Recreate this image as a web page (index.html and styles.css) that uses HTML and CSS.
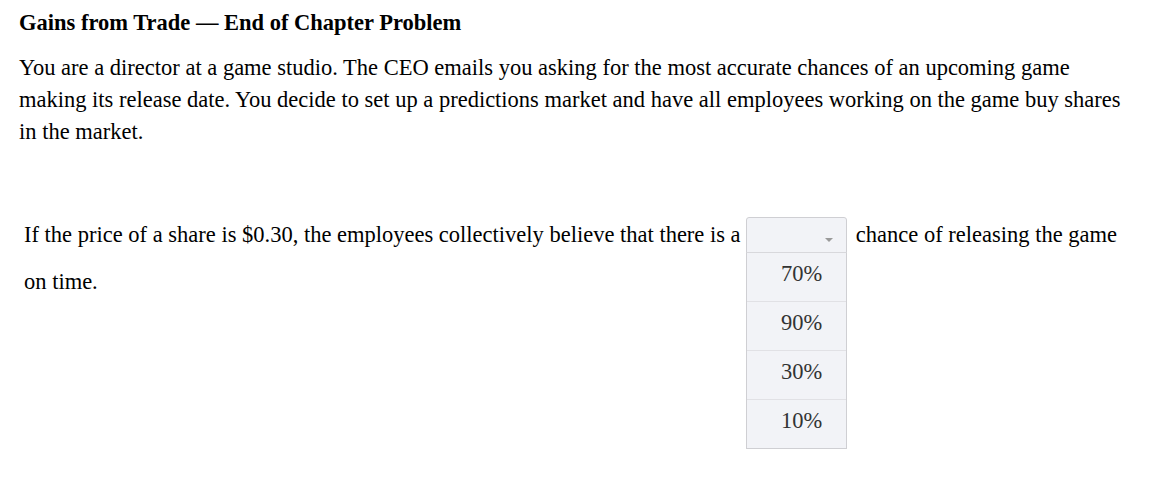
FILE: index.html
```html
<!DOCTYPE html>
<html>
<head>
<meta charset="utf-8">
<link rel="stylesheet" href="styles.css">
</head>
<body>
<div class="page">
  <h1 class="title">Gains from Trade — End of Chapter Problem</h1>
  <p class="intro">You are a director at a game studio. The CEO emails you asking for the most accurate chances of an upcoming game making its release date. You decide to set up a predictions market and have all employees working on the game buy shares in the market.</p>
  <div class="question">If the price of a share is $0.30, the employees collectively believe that there is a <span class="select"><span class="select-head"><span class="caret"></span></span><span class="menu"><span class="option">70%</span><span class="option">90%</span><span class="option">30%</span><span class="option">10%</span></span></span> chance of releasing the game on time.</div>
</div>
</body>
</html>
```
FILE: styles.css
```css
html, body { margin: 0; padding: 0; background: #fff; }
body { font-family: "Liberation Serif", "Times New Roman", serif; color: #000; min-height: 480px; }
.page { padding: 8px 19px 0 19px; min-height: 470px; }
.title { margin: 0; font-size: 22.5px; line-height: 30px; font-weight: bold; }
.intro { margin: 14px 0 0 0; font-size: 22.5px; line-height: 32px; }
.question { margin-top: 63px; padding-left: 5px; font-size: 22.5px; line-height: 47px; }
.select { position: relative; display: inline-block; vertical-align: middle; width: 101px; height: 36px; margin: 0 3px 4px 0; }
.select-head { display: block; box-sizing: border-box; height: 36px; border: 1px solid #cfcfd3; border-radius: 3px 3px 0 0; background: #f2f3f7; position: relative; }
.caret { position: absolute; right: 13px; top: 20px; width: 0; height: 0; border-left: 4px solid transparent; border-right: 4px solid transparent; border-top: 4px solid #9a9a9a; }
.menu { position: absolute; left: 0; top: 35px; width: 101px; height: 197px; box-sizing: border-box; border: 1px solid #cfcfd3; border-top: 1px solid #d8d8dc; background: #f2f3f7; display: block; z-index: 2; }
.option { display: block; box-sizing: border-box; height: 49px; line-height: 42px; text-align: center; padding-left: 10px; color: #333; border-top: 1px solid #e1e1e5; }
.option:first-child { border-top: none; height: 48px; }
```
